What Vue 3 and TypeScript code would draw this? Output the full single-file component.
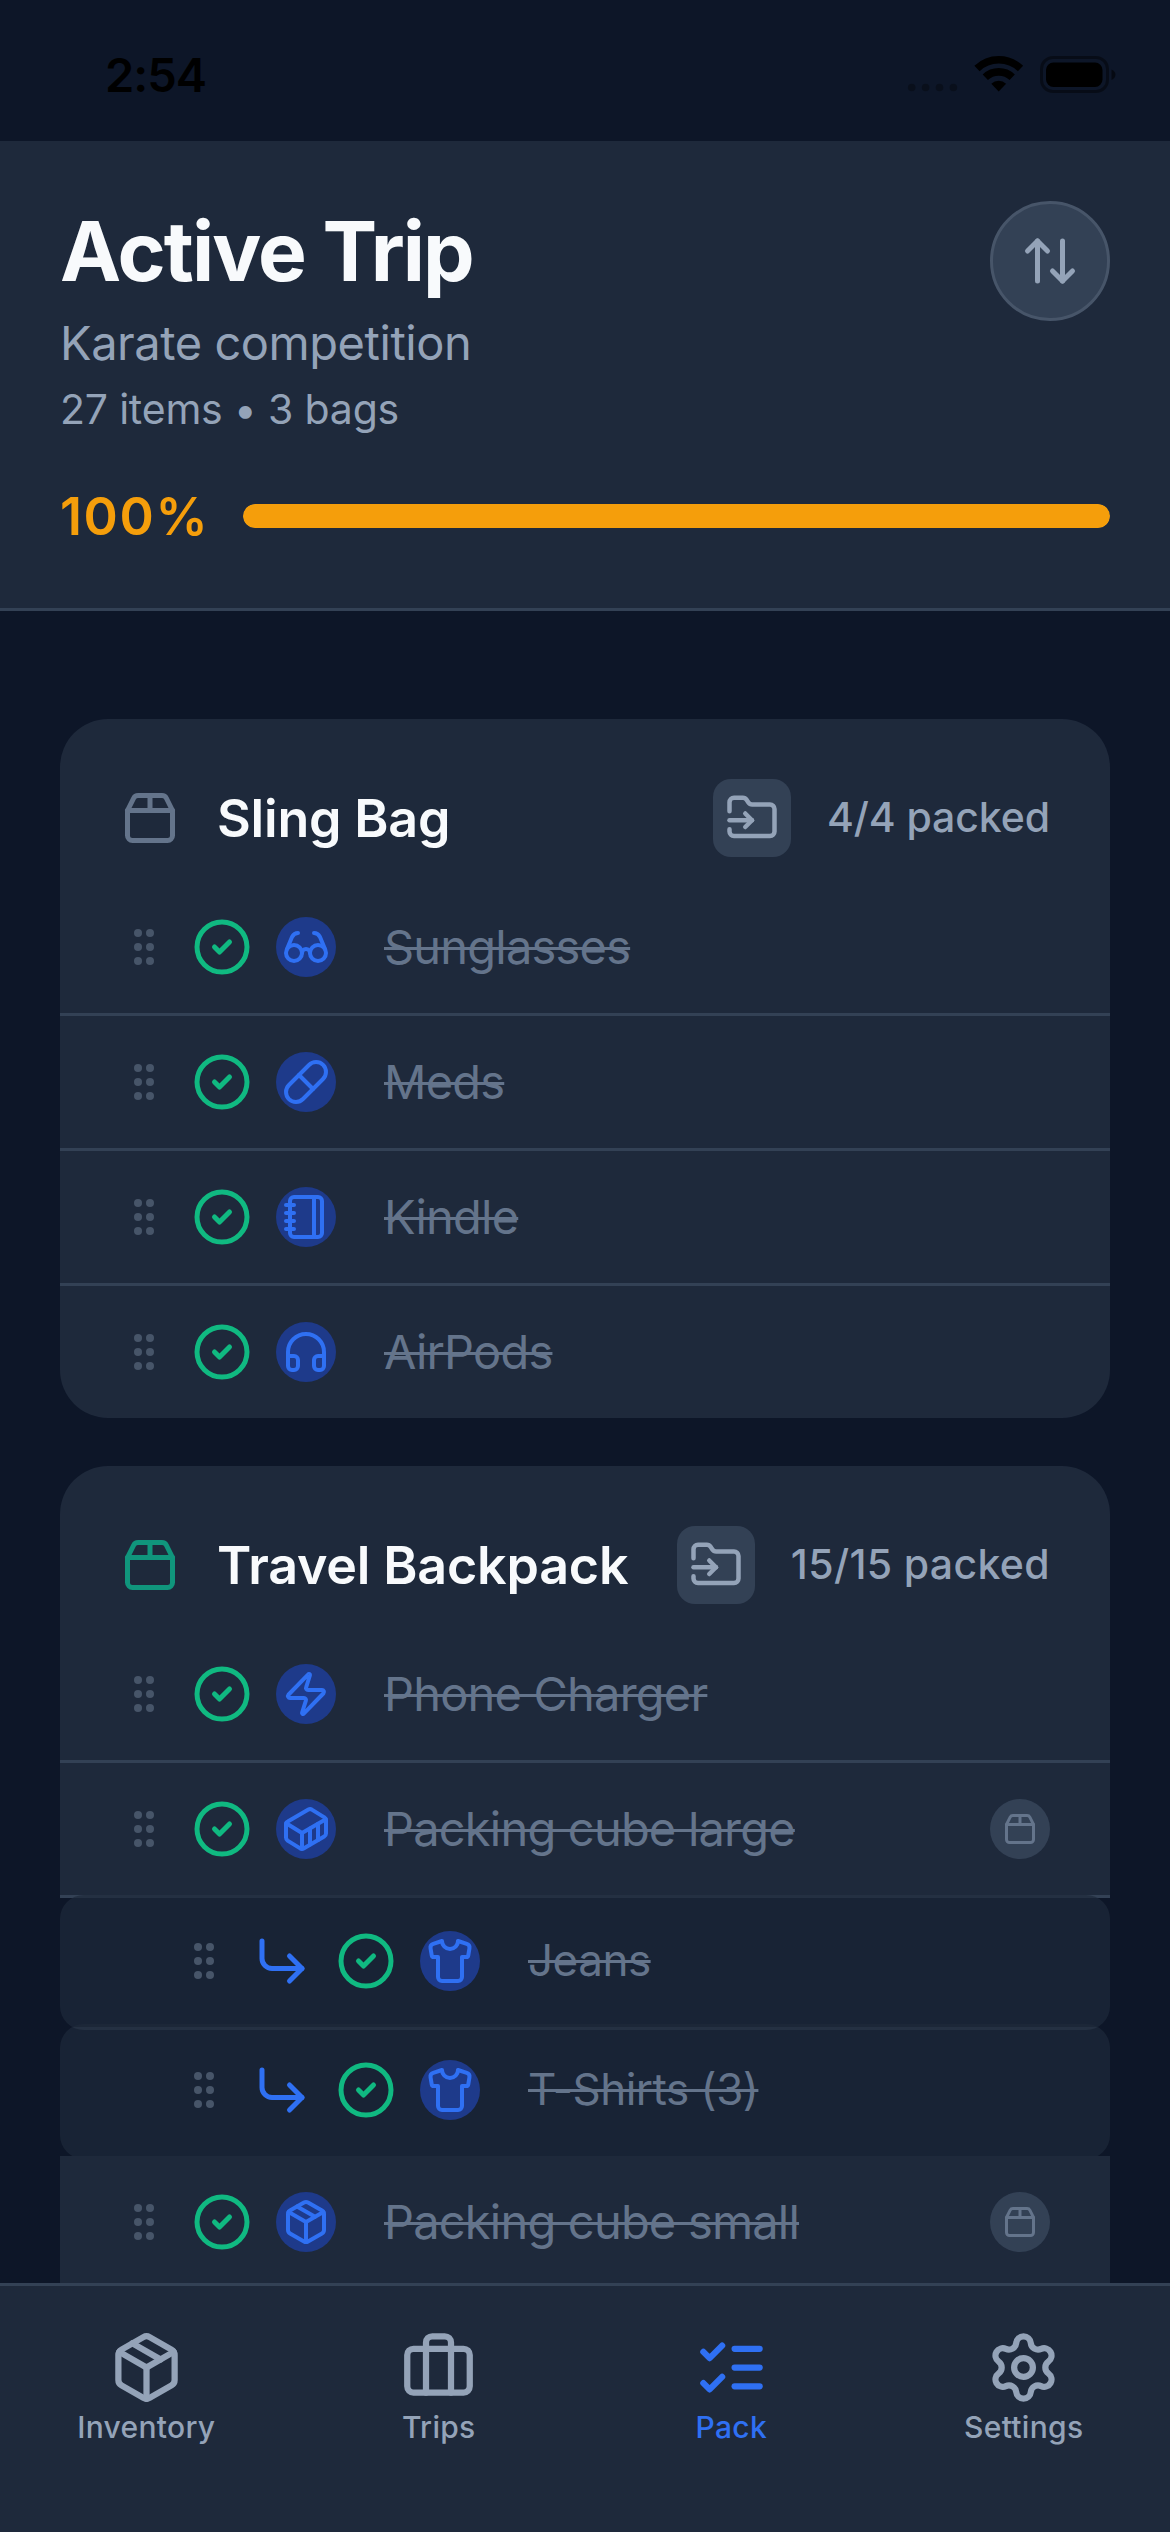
<script setup lang="ts">
interface Item {
  name: string
  icon: string
  nested?: boolean
  container?: boolean
}

interface Bag {
  name: string
  tone: string
  packed: string
  items: Item[]
}

const icons: Record<string, string[]> = {
  sort: ['m21 16-4 4-4-4', 'M17 20V4', 'm3 8 4-4 4 4', 'M7 4v16'],
  bag: [
    'M3 9h18v10a2 2 0 0 1-2 2H5a2 2 0 0 1-2-2V9Z',
    'm3 9 2.45-4.9A2 2 0 0 1 7.24 3h9.52a2 2 0 0 1 1.8 1.1L21 9',
    'M12 3v6',
  ],
  folder: [
    'M2 9V5a2 2 0 0 1 2-2h3.9a2 2 0 0 1 1.69.9l.81 1.2a2 2 0 0 0 1.67.9H20a2 2 0 0 1 2 2v10a2 2 0 0 1-2 2H4a2 2 0 0 1-2-2v-1',
    'M2 13h10',
    'm9 16 3-3-3-3',
  ],
  check: ['M2 12a10 10 0 1 0 20 0a10 10 0 1 0-20 0', 'm9 12 2 2 4-4'],
  nest: ['m15 10 5 5-5 5', 'M4 4v7a4 4 0 0 0 4 4h12'],
  glasses: [
    'M2 15a4 4 0 1 0 8 0a4 4 0 1 0-8 0',
    'M14 15a4 4 0 1 0 8 0a4 4 0 1 0-8 0',
    'M14 15a2 2 0 0 0-2-2 2 2 0 0 0-2 2',
    'M2.5 13 5 7c.7-1.3 1.4-2 3-2',
    'M21.5 13 19 7c-.7-1.3-1.5-2-3-2',
  ],
  pill: [
    'm10.5 20.5 10-10a4.95 4.95 0 1 0-7-7l-10 10a4.95 4.95 0 1 0 7 7Z',
    'm8.5 8.5 7 7',
  ],
  notebook: [
    'M2 6h4', 'M2 10h4', 'M2 14h4', 'M2 18h4',
    'M6 2h12a2 2 0 0 1 2 2v16a2 2 0 0 1-2 2H6a2 2 0 0 1-2-2V4a2 2 0 0 1 2-2Z',
    'M16 2v20',
  ],
  headphones: [
    'M3 14h3a2 2 0 0 1 2 2v3a2 2 0 0 1-2 2H5a2 2 0 0 1-2-2v-7a9 9 0 0 1 18 0v7a2 2 0 0 1-2 2h-1a2 2 0 0 1-2-2v-3a2 2 0 0 1 2-2h3',
  ],
  zap: [
    'M4 14a1 1 0 0 1-.78-1.63l9.9-10.2a.5.5 0 0 1 .86.46l-1.92 6.02A1 1 0 0 0 13 10h7a1 1 0 0 1 .78 1.63l-9.9 10.2a.5.5 0 0 1-.86-.46l1.92-6.02A1 1 0 0 0 11 14z',
  ],
  crate: [
    'M22 7.7c0-.6-.4-1.2-.8-1.5l-6.3-3.9a1.72 1.72 0 0 0-1.7 0l-10.3 6c-.5.2-.9.8-.9 1.4v6.6c0 .5.4 1.2.8 1.5l6.3 3.9a1.72 1.72 0 0 0 1.7 0l10.3-6c.5-.3.9-1 .9-1.5Z',
    'M10 21.9V14L2.1 9.1',
    'm10 14 11.9-6.9',
    'M14 19.8v-8.1',
    'M18 17.5V9.4',
  ],
  shirt: [
    'M20.38 3.46 16 2a4 4 0 0 1-8 0L3.62 3.46a2 2 0 0 0-1.34 2.23l.58 3.47a1 1 0 0 0 .99.84H6v10c0 1.1.9 2 2 2h8a2 2 0 0 0 2-2V10h2.15a1 1 0 0 0 .99-.84l.58-3.47a2 2 0 0 0-1.34-2.23z',
  ],
  cube: [
    'M11 21.73a2 2 0 0 0 2 0l7-4A2 2 0 0 0 21 16V8a2 2 0 0 0-1-1.73l-7-4a2 2 0 0 0-2 0l-7 4A2 2 0 0 0 3 8v8a2 2 0 0 0 1 1.73z',
    'M12 22V12',
    'm3.3 7 8.7 5 8.7-5',
    'm7.5 4.27 9 5.15',
  ],
  suitcase: [
    'M16 20V4a2 2 0 0 0-2-2h-4a2 2 0 0 0-2 2v16',
    'M4 6h16a2 2 0 0 1 2 2v10a2 2 0 0 1-2 2H4a2 2 0 0 1-2-2V8a2 2 0 0 1 2-2Z',
  ],
  checklist: ['m3 17 2 2 4-4', 'm3 7 2 2 4-4', 'M13 6h8', 'M13 12h8', 'M13 18h8'],
  gear: [
    'M9.671 4.136a2.34 2.34 0 0 1 4.659 0 2.34 2.34 0 0 0 3.319 1.915 2.34 2.34 0 0 1 2.33 4.033 2.34 2.34 0 0 0 0 3.831 2.34 2.34 0 0 1-2.33 4.033 2.34 2.34 0 0 0-3.319 1.915 2.34 2.34 0 0 1-4.659 0 2.34 2.34 0 0 0-3.32-1.915 2.34 2.34 0 0 1-2.33-4.033 2.34 2.34 0 0 0 0-3.831A2.34 2.34 0 0 1 6.35 6.051a2.34 2.34 0 0 0 3.319-1.915',
    'M9 12a3 3 0 1 0 6 0a3 3 0 1 0-6 0',
  ],
}

const progress = 100

const bags: Bag[] = [
  {
    name: 'Sling Bag',
    tone: 'gray',
    packed: '4/4 packed',
    items: [
      { name: 'Sunglasses', icon: 'glasses' },
      { name: 'Meds', icon: 'pill' },
      { name: 'Kindle', icon: 'notebook' },
      { name: 'AirPods', icon: 'headphones' },
    ],
  },
  {
    name: 'Travel Backpack',
    tone: 'green',
    packed: '15/15 packed',
    items: [
      { name: 'Phone Charger', icon: 'zap' },
      { name: 'Packing cube large', icon: 'crate', container: true },
      { name: 'Jeans', icon: 'shirt', nested: true },
      { name: 'T-Shirts (3)', icon: 'shirt', nested: true },
      { name: 'Packing cube small', icon: 'cube', container: true },
    ],
  },
]

const tabs = [
  { label: 'Inventory', icon: 'cube' },
  { label: 'Trips', icon: 'suitcase' },
  { label: 'Pack', icon: 'checklist', active: true },
  { label: 'Settings', icon: 'gear' },
]
</script>

<template>
  <div class="screen">
    <div class="status">
      <span class="time">2:54</span>
      <svg class="indicators" width="212" height="40" viewBox="0 0 212 40">
        <g opacity="0.3">
          <circle v-for="n in 4" :key="n" :cx="-7.2 + n * 13.9" cy="33.5" r="3.8" />
        </g>
        <g fill="none" stroke="#000" stroke-width="7.6">
          <path d="M72 14.5a31.500 31.500 0 0 1 43.500 0" />
          <path d="M80.300 23.300a19.500 19.500 0 0 1 26.900 0" />
        </g>
        <path d="M93.700 37.400 L86.300 29.700 A11 11 0 0 1 101.100 29.700 Z" />
        <rect x="136.500" y="3.500" width="66" height="34" rx="11.500" fill="none" stroke="#000" stroke-opacity="0.42" stroke-width="3" />
        <rect x="141" y="8.500" width="56.500" height="24.500" rx="7.500" />
        <path d="M206.500 15.500c2.600 1 4 3 4 5.200s-1.400 4.200-4 5.200z" opacity="0.55" />
      </svg>
    </div>

    <header class="header">
      <div class="heading">
        <div>
          <h1>Active Trip</h1>
          <p class="trip"><span>Karate competition</span></p>
          <p class="counts"><span>27 items • 3 bags</span></p>
        </div>
        <button class="sort" type="button">
          <svg class="icon s60" viewBox="0 0 24 24"><path v-for="d in icons.sort" :key="d" :d="d" /></svg>
        </button>
      </div>
      <div class="progress">
        <span class="percent">{{ progress }}%</span>
        <div class="track"><div class="fill" :style="{ width: progress + '%' }"></div></div>
      </div>
    </header>

    <main class="list">
      <section v-for="bag in bags" :key="bag.name" class="card">
        <div class="card-head">
          <svg class="icon s60" :class="bag.tone" viewBox="0 0 24 24"><path v-for="d in icons.bag" :key="d" :d="d" /></svg>
          <h2>{{ bag.name }}</h2>
          <button class="move" type="button">
            <svg class="icon s54" viewBox="0 0 24 24"><path v-for="d in icons.folder" :key="d" :d="d" /></svg>
          </button>
          <span class="packed">{{ bag.packed }}</span>
        </div>
        <div v-for="item in bag.items" :key="item.name" class="row" :class="{ nested: item.nested }">
          <span class="grip"><i v-for="n in 6" :key="n"></i></span>
          <svg v-if="item.nested" class="icon s60 nest" viewBox="0 0 24 24"><path v-for="d in icons.nest" :key="d" :d="d" /></svg>
          <svg class="icon s60 check" viewBox="0 0 24 24"><path v-for="d in icons.check" :key="d" :d="d" /></svg>
          <span class="badge">
            <svg class="icon s48" viewBox="0 0 24 24"><path v-for="d in icons[item.icon]" :key="d" :d="d" /></svg>
          </span>
          <span class="name"><s>{{ item.name }}</s></span>
          <span v-if="item.container" class="holder">
            <svg class="icon s36" viewBox="0 0 24 24"><path v-for="d in icons.bag" :key="d" :d="d" /></svg>
          </span>
        </div>
      </section>
    </main>

    <nav class="tabs">
      <a v-for="tab in tabs" :key="tab.label" class="tab" :class="{ active: tab.active }">
        <svg class="icon s75" viewBox="0 0 24 24"><path v-for="d in icons[tab.icon]" :key="d" :d="d" /></svg>
        <span>{{ tab.label }}</span>
      </a>
    </nav>
  </div>
</template>

<style>
body {
  margin: 0;
  background: #0d1628;
}
</style>

<style scoped>
.screen {
  display: flex;
  flex-direction: column;
  width: 1170px;
  height: 2532px;
  overflow: hidden;
  background: #0d1628;
  color: #f8fafc;
  font-family: Inter, "Liberation Sans", sans-serif;
}

h1,
h2,
p {
  margin: 0;
}

button {
  padding: 0;
  border: 0;
  font: inherit;
}

.icon {
  display: block;
  flex: none;
  fill: none;
  stroke: currentColor;
  stroke-width: 2;
  stroke-linecap: round;
  stroke-linejoin: round;
}

.s36 { width: 36px; height: 36px; }
.s48 { width: 48px; height: 48px; }
.s54 { width: 54px; height: 54px; }
.s60 { width: 60px; height: 60px; }
.s75 { width: 75px; height: 75px; }

.status {
  display: flex;
  flex: none;
  justify-content: space-between;
  box-sizing: border-box;
  height: 141px;
  padding: 54px 53px 0 105px;
  color: #000;
}

.time {
  font-size: 47px;
  font-weight: 600;
  line-height: 41px;
  letter-spacing: -1px;
}

.indicators {
  display: block;
}

.header {
  flex: none;
  box-sizing: border-box;
  height: 470px;
  padding: 60px 60px 0;
  border-bottom: 3px solid #334155;
  background: #1e293b;
}

.heading {
  display: flex;
  justify-content: space-between;
  height: 240px;
}

h1 {
  height: 100px;
  font-size: 82px;
  font-weight: 700;
  line-height: 102px;
  letter-spacing: -1.9px;
  white-space: nowrap;
}

.trip {
  height: 84px;
  color: #94a3b8;
  font-size: 47px;
  line-height: 84px;
  letter-spacing: -0.45px;
}

.counts {
  height: 48px;
  color: #94a3b8;
  font-size: 41px;
  line-height: 48px;
  letter-spacing: -0.2px;
}

.sort {
  display: flex;
  align-items: center;
  justify-content: center;
  box-sizing: border-box;
  width: 120px;
  height: 120px;
  border: 3px solid #475569;
  border-radius: 50%;
  background: #334155;
  color: #94a3b8;
}

.progress {
  display: flex;
  align-items: center;
  height: 150px;
}

.percent {
  width: 183px;
  color: #f59e0b;
  font-size: 52px;
  font-weight: 600;
  letter-spacing: 1.6px;
}

.track {
  flex: 1;
  height: 24px;
  overflow: hidden;
  border-radius: 12px;
  background: #334155;
}

.fill {
  height: 100%;
  border-radius: 12px;
  background: #f59e0b;
}

.list {
  display: flex;
  flex: 1;
  flex-direction: column;
  gap: 48px;
  min-height: 0;
  padding: 108px 60px 0;
  overflow: hidden;
}

.card {
  display: flex;
  flex: none;
  flex-direction: column;
  overflow: hidden;
  border-radius: 48px;
}

/* The last card runs on under the tab bar. */
.card:last-child {
  border-radius: 48px 48px 0 0;
}

.card-head {
  display: flex;
  align-items: center;
  height: 78px;
  padding: 60px 60px 24px;
  background: #1e293b;
}

.gray { color: #64748b; }
.green { color: #10957c; }

h2 {
  flex: 1;
  margin-left: 37px;
  font-size: 52px;
  font-weight: 600;
  letter-spacing: -0.2px;
  white-space: nowrap;
}

.move {
  display: flex;
  align-items: center;
  justify-content: center;
  width: 78px;
  height: 78px;
  margin-right: 36px;
  border-radius: 18px;
  background: #334155;
  color: #94a3b8;
}

.packed {
  color: #94a3b8;
  font-size: 41px;
  font-weight: 500;
  line-height: 46px;
  letter-spacing: -0.1px;
  margin-top: -2px;
}

.card:last-child .packed {
  letter-spacing: 0.35px;
}

.row {
  position: relative;
  display: flex;
  align-items: center;
  box-sizing: border-box;
  height: 135px;
  padding: 0 60px 3px;
  background: linear-gradient(#334155, #334155) bottom / 100% 3px no-repeat #1e293b;
}

.row:last-child {
  height: 132px;
  padding-bottom: 0;
  background: #1e293b;
}

.row.nested {
  margin: -3px 0;
  padding-left: 120px;
  border-radius: 24px;
  background-color: rgba(30, 41, 59, 0.7);
}

.grip {
  display: grid;
  grid-template-columns: 8px 8px;
  gap: 6px 4px;
  margin: 0 38px 0 14px;
}

.grip i {
  width: 8px;
  height: 8px;
  border-radius: 50%;
  background: #475569;
}

.nest {
  margin-right: 24px;
  color: #2f70f3;
}

.check {
  color: #10b981;
}

.badge,
.holder {
  display: flex;
  align-items: center;
  justify-content: center;
  width: 60px;
  height: 60px;
  border-radius: 50%;
}

.badge {
  margin: 0 48px 0 24px;
  background: #1e3a8a;
  color: #2f70f3;
}

.holder {
  background: #334155;
  color: #64748b;
}

.name {
  flex: 1;
  margin-top: -2px;
  color: #64748b;
  font-size: 47px;
  letter-spacing: -0.8px;
  white-space: nowrap;
}

.nested .name {
  font-size: 44px;
  letter-spacing: -0.5px;
}

.name s {
  text-decoration-thickness: 3px;
}

.tabs {
  display: flex;
  flex: none;
  box-sizing: border-box;
  height: 249px;
  padding-top: 44px;
  border-top: 3px solid #334155;
  background: #1e293b;
}

.tab {
  display: flex;
  flex: 1;
  flex-direction: column;
  align-items: center;
  color: #94a3b8;
  font-size: 30px;
  font-weight: 500;
  line-height: 36px;
  letter-spacing: 0.3px;
}

.tab span {
  margin-top: 4px;
}

.tab.active {
  color: #2f70f3;
}
</style>
